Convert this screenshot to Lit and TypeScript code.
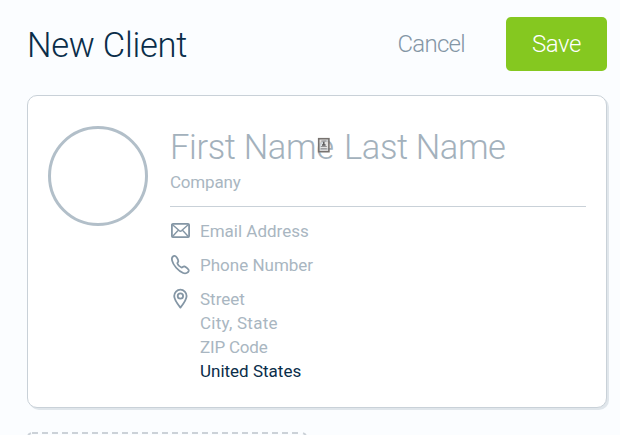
import { LitElement, html, css } from "lit";
import { customElement } from "lit/decorators.js";

@customElement("client-card")
class ClientCard extends LitElement {
  static styles = css`
    :host {
      display: flex;
      box-sizing: border-box;
      height: 313px;
      padding: 30px 20px 0 20px;
      gap: 22px;
      background: #fff;
      border: 1px solid #c9d1d8;
      border-radius: 10px;
      box-shadow: 2px 2px 0 #e0e6eb;
      color: #a9b6c1;
    }
    .avatar {
      flex: none;
      box-sizing: border-box;
      width: 100px;
      height: 100px;
      border: 3px solid #b2bfc9;
      border-radius: 50%;
    }
    .fields {
      flex: 1;
      min-width: 0;
    }
    .names {
      display: flex;
      height: 40px;
      line-height: 42px;
      font-size: 34.5px;
      font-weight: 300;
      white-space: nowrap;
      color: #a3b1bc;
    }
    .first {
      position: relative;
      width: 174px;
      letter-spacing: -0.35px;
    }
    .last {
      letter-spacing: -0.4px;
    }
    .autofill {
      position: absolute;
      left: 147px;
      top: 11px;
      display: block;
    }
    .company {
      box-sizing: border-box;
      height: 41px;
      line-height: 33px;
      font-size: 17px;
      letter-spacing: -0.2px;
      border-bottom: 1px solid #c9d1d8;
    }
    .row {
      display: flex;
      gap: 10px;
      margin-bottom: 10px;
      font-size: 17px;
      line-height: 24px;
    }
    .details {
      padding-top: 12px;
    }
    .icon {
      flex: none;
      width: 20px;
      height: 24px;
      fill: none;
      stroke: #8496a5;
      stroke-width: 1.8;
      stroke-linejoin: round;
      stroke-linecap: round;
    }
    .city {
      letter-spacing: 0.25px;
    }
    .zip {
      letter-spacing: -0.2px;
    }
    .country {
      color: #0a2d49;
    }
  `;

  render() {
    return html`
      <div class="avatar"></div>
      <div class="fields">
        <div class="names">
          <div class="first">
            First Name
            <svg class="autofill" width="14" height="17" viewBox="0 0 14 17">
              <rect x="1.7" y="1.7" width="10.2" height="13" fill="#d8d8d8" fill-opacity="0.7" stroke="#77726f" stroke-width="1.6" />
              <path d="M4.3 4h5M3.8 9.5h6M3.8 11.8h6" stroke="#88888a" stroke-width="0.9" />
              <path d="M6.8 4.7v2.8M5 8h3.6" stroke="#5b5b5e" stroke-width="1.5" />
            </svg>
          </div>
          <div class="last">Last Name</div>
        </div>
        <div class="company">Company</div>
        <div class="details">
          <div class="row">
            <svg class="icon" viewBox="0 0 20 24">
              <rect x="1.9" y="4.9" width="17.2" height="13.3" rx="1.2" />
              <path d="M2.3 5.4l6.8 6.2q1.3 1.1 2.6 0L18.5 5.4M2.3 17.8l5.5-6M18.5 17.8l-5.5-6" stroke-width="1.4" />
            </svg>
            <span>Email Address</span>
          </div>
          <div class="row">
            <svg class="icon" viewBox="0 0 20 24">
              <path d="M4.2 2.9C2.4 3.4 1.5 5.2 2.1 7.6C3.2 12.2 8.2 18 13.2 20C15.6 20.9 18.2 19.9 18.8 17.8C19.1 16.5 16.2 14.2 14.5 13.4C13.3 12.8 12.4 14.8 11.5 14.5C9.8 13.7 7.8 11.7 7.4 10.4C7.1 9.5 8.7 9.2 8.3 7.7C7.9 6 6 2.4 4.2 2.9Z" />
            </svg>
            <span>Phone Number</span>
          </div>
          <div class="row">
            <svg class="icon" viewBox="0 0 20 24">
              <path d="M10.4 20.6C8 17.6 4.2 12.8 4.2 9A6.2 6.3 0 0 1 16.6 9C16.6 12.8 12.8 17.6 10.4 20.6Z" />
              <circle cx="10.4" cy="9" r="2.7" />
            </svg>
            <div>
              <div>Street</div>
              <div class="city">City, State</div>
              <div class="zip">ZIP Code</div>
              <div class="country">United States</div>
            </div>
          </div>
        </div>
      </div>
    `;
  }
}

@customElement("app-root")
class AppRoot extends LitElement {
  static styles = css`
    :host {
      display: block;
      box-sizing: border-box;
      height: 435px;
      overflow: hidden;
      padding: 17px 13px 0 27px;
      background: #fbfdff;
      font-family: Roboto, "Liberation Sans", sans-serif;
    }
    header {
      display: flex;
      align-items: flex-start;
      height: 54px;
      margin-bottom: 24px;
    }
    h1 {
      flex: 1;
      margin: 0;
      font-size: 34.5px;
      font-weight: 330;
      letter-spacing: -0.25px;
      line-height: 56px;
      color: #0a2d49;
    }
    button {
      height: 54px;
      padding: 0;
      border: 0;
      background: none;
      font: 300 24px/54px Roboto, "Liberation Sans", sans-serif;
      color: #8496a5;
    }
    .cancel {
      margin-right: 41px;
      letter-spacing: -0.7px;
    }
    .save {
      width: 101px;
      border-radius: 5px;
      background: #85c820;
      color: #fff;
      letter-spacing: -0.4px;
    }
    .next {
      display: block;
      margin-top: 24px;
      fill: none;
      stroke: #ccd2d8;
      stroke-width: 2;
      stroke-dasharray: 6 4;
    }
  `;

  render() {
    return html`
      <header>
        <h1>New Client</h1>
        <button class="cancel">Cancel</button>
        <button class="save">Save</button>
      </header>
      <client-card></client-card>
      <svg class="next" width="280" height="60">
        <path d="M5 1H275" />
        <path d="M1 8V5Q1 2 4 1.2M279 8V5Q279 2 276 1.2" stroke-dasharray="none" />
      </svg>
    `;
  }
}
